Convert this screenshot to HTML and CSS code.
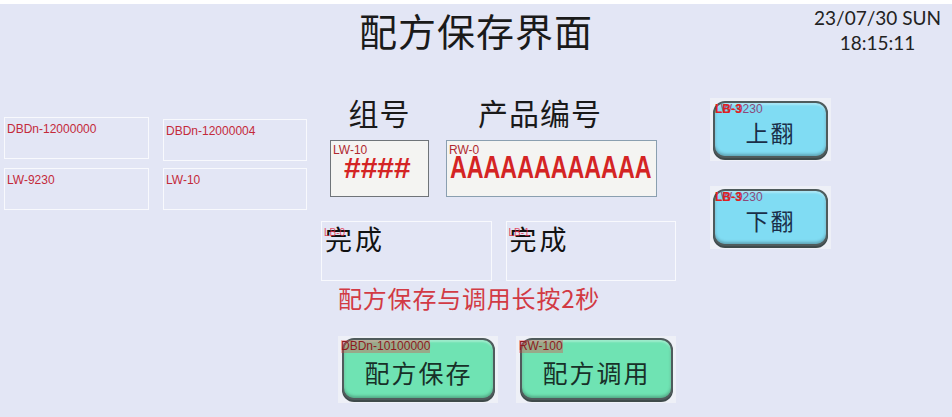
FILE: index.html
```html
<!DOCTYPE html>
<html lang="zh-CN">
<head>
<meta charset="utf-8">
<title>配方保存界面</title>
<link rel="stylesheet" href="styles.css">
</head>
<body>
<div class="screen">
  <header class="header">
    <div class="spacer"></div>
    <h1 class="title">配方保存界面</h1>
    <div class="clock">
      <div class="date">23/07/30 SUN</div>
      <div class="time">18:15:11</div>
    </div>
  </header>
  <main class="main">
    <section class="left">
      <div class="addr">DBDn-12000000</div>
      <div class="addr addr-b">DBDn-12000004</div>
      <div class="addr">LW-9230</div>
      <div class="addr">LW-10</div>
    </section>
    <section class="center">
      <div class="field-row labels">
        <div class="lbl lbl-group">组号</div>
        <div class="lbl lbl-prod">产品编号</div>
      </div>
      <div class="field-row inputs">
        <div class="input input-group">
          <span class="tag">LW-10</span>
          <span class="value hash">####</span>
        </div>
        <div class="input input-prod">
          <span class="tag">RW-0</span>
          <span class="value aaa">AAAAAAAAAAAA</span>
        </div>
      </div>
      <div class="done-row">
        <div class="done"><span class="done-tag">LB-0</span>完成</div>
        <div class="done"><span class="done-tag">LB-1</span>完成</div>
      </div>
      <p class="hint">配方保存与调用长按2秒</p>
      <div class="btn-row">
        <div class="pad"><div class="btn green"><span class="btn-tag">DBDn-10100000</span>配方保存</div></div>
        <div class="pad"><div class="btn green"><span class="btn-tag">RW-100</span>配方调用</div></div>
      </div>
    </section>
    <section class="right">
      <div class="pad pad-s"><div class="btn cyan"><span class="btn-tag dual"><span class="t1">LW-9230</span><span class="t2">LB-3</span></span>上翻</div></div>
      <div class="pad pad-s"><div class="btn cyan"><span class="btn-tag dual"><span class="t1">LW-9230</span><span class="t2">LB-3</span></span>下翻</div></div>
    </section>
  </main>
</div>
</body>
</html>
```

FILE: styles.css
```css
* { box-sizing: border-box; }
html, body { margin: 0; padding: 0; }
body {
  width: 952px;
  height: 417px;
  overflow: hidden;
  background: #e3e6f5;
  font-family: "Noto Sans CJK SC", "Noto Sans", sans-serif;
}
.screen {
  width: 952px;
  height: 417px;
  border-top: 4px solid #ffffff;
  background: #e3e6f5;
}
.header {
  height: 96px;
  display: grid;
  grid-template-columns: 1fr auto 1fr;
  align-items: start;
}
.title {
  margin: 0;
  padding-top: 4px;
  font-weight: normal;
  font-size: 38px;
  line-height: 44px;
  letter-spacing: 1px;
  color: #1a1a1a;
}
.clock {
  justify-self: end;
  padding-right: 11px;
  padding-top: 2px;
  text-align: center;
  font-family: Lato, "Liberation Sans", sans-serif;
  font-size: 19px;
  line-height: 24px;
  color: #222;
}
.time { margin-top: 1px; }

.main {
  display: flex;
  align-items: flex-start;
}
.left {
  width: 321px;
  padding: 17px 0 0 4px;
  display: grid;
  grid-template-columns: 145px 144px;
  grid-auto-rows: 42px;
  column-gap: 14px;
  row-gap: 9px;
}
.addr {
  border: 1px solid #f8f9fd;
  padding: 4px 0 0 2px;
  font-family: "Liberation Sans", Arial, sans-serif;
  font-size: 12px;
  line-height: 14px;
  color: #c42a3a;
}
.addr-b { margin-top: 2px; margin-bottom: -2px; }

.center {
  width: 355px;
  display: flex;
  flex-direction: column;
}
.field-row {
  display: flex;
  padding-left: 9px;
  gap: 17px;
}
.labels { height: 40px; }
.lbl {
  margin-top: -4px;
  font-size: 30px;
  line-height: 32px;
  color: #1a1a1a;
  letter-spacing: 1px;
}
.lbl-group { width: 99px; text-align: center; }
.lbl-prod { width: 211px; padding-left: 32px; }
.input {
  position: relative;
  height: 57px;
  background: #f4f4f2;
  border: 1px solid #6f7479;
  font-family: "Liberation Sans", Arial, sans-serif;
  overflow: hidden;
}
.input-group { width: 99px; }
.input-prod { width: 211px; border-color: #8a9fb0; }
.tag {
  position: absolute;
  left: 2px;
  top: 3px;
  font-size: 12px;
  line-height: 13px;
  color: #b02a30;
}
.value {
  position: absolute;
  top: 10px;
  font-size: 30px;
  line-height: 34px;
  color: #d42424;
}
.hash { left: 13px; font-weight: bold; }
.aaa {
  left: 3px;
  font-size: 31px;
  font-weight: bold;
  transform: scaleX(0.75);
  transform-origin: left center;
  white-space: nowrap;
}

.done-row {
  display: flex;
  gap: 14px;
  margin-top: 24px;
}
.done {
  position: relative;
  width: 171px;
  height: 60px;
  border: 1px solid #f8f9fd;
  padding: 0 0 0 3px;
  font-size: 27px;
  line-height: 34px;
  letter-spacing: 3px;
  color: #111;
}
.done-tag {
  position: absolute;
  left: 2px;
  top: 5px;
  font-family: "Liberation Sans", Arial, sans-serif;
  font-size: 10px;
  line-height: 11px;
  letter-spacing: 0;
  color: #e0304a;
  opacity: 0.85;
}
.hint {
  margin: 2px 0 0 0;
  padding-left: 17px;
  font-size: 24px;
  line-height: 30px;
  letter-spacing: 0.8px;
  color: #d23a44;
}
.btn-row {
  display: flex;
  gap: 18px;
  margin-top: 23px;
  padding-left: 17px;
}
.pad {
  width: 161px;
  height: 67px;
  padding: 2px 3px 3px 4px;
  background: #eef0f7;
}
.pad-s {
  width: 121px;
  height: 63px;
  padding: 3px 3px 3px 3px;
}
.btn {
  position: relative;
  height: 100%;
  border: 2px solid #4f5b5c;
  border-radius: 12px;
  box-shadow: 0 2px 0 #3f4a4b, inset 0 -2px 3px rgba(0,0,0,0.25), inset 0 2px 2px rgba(255,255,255,0.35);
  display: flex;
  align-items: center;
  justify-content: center;
  padding-top: 6px;
  font-size: 25px;
  letter-spacing: 2px;
  color: #183028;
}
.green { background: #6fe3b3; }
.cyan {
  background: #80dcf3;
  font-size: 23px;
  color: #1a2e48;
  padding-top: 4px;
}
.btn-tag {
  position: absolute;
  left: -3px;
  top: 0px;
  font-family: "Liberation Sans", Arial, sans-serif;
  font-size: 12px;
  line-height: 13px;
  letter-spacing: 0;
  color: #8e1a1e;
  background: rgba(230, 60, 60, 0.35);
}
.dual { background: none; left: 0; }
.dual .t1 { color: #8a4a7a; }
.dual .t2 {
  position: absolute;
  left: 0;
  top: 0;
  color: #e02020;
  font-weight: bold;
}
.right {
  width: 121px;
  margin-left: 34px;
  margin-top: -2px;
  display: flex;
  flex-direction: column;
  gap: 25px;
}
```
